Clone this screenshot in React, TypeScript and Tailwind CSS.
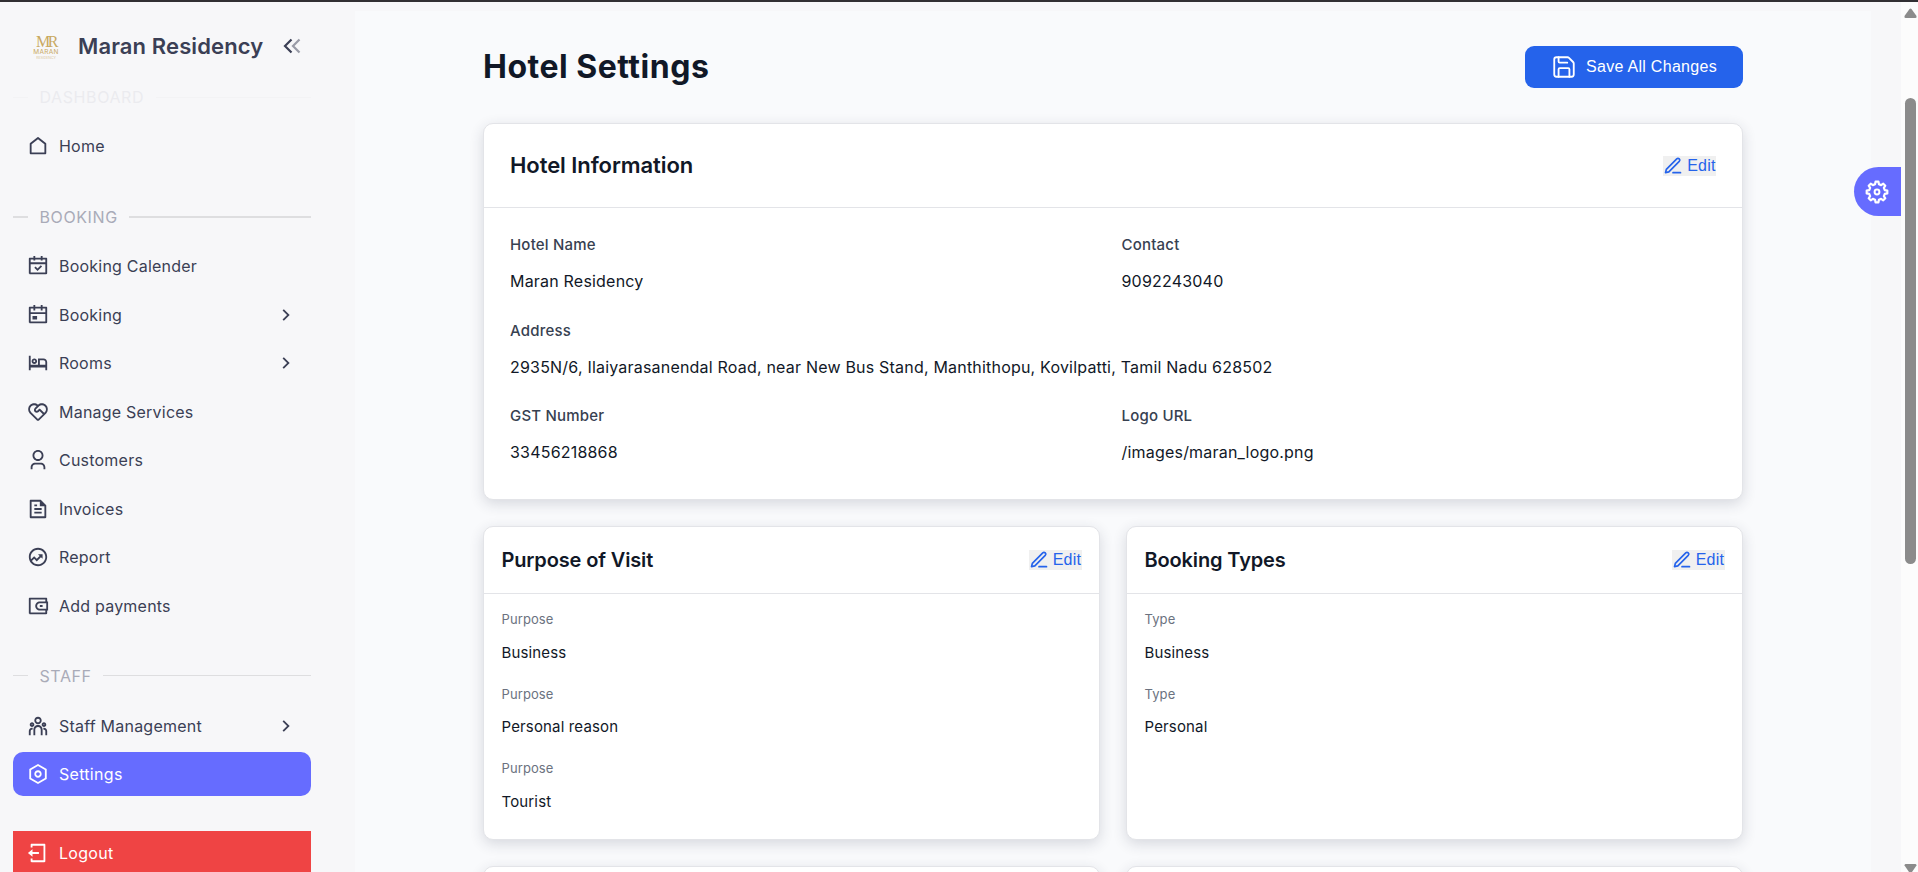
import React from "react";
import {
  RiCalendarCheckLine, RiCalendarEventLine, RiHotelBedLine, RiServiceLine,
  RiUser3Line, RiFileTextLine, RiFundsLine, RiWallet3Line, RiTeamLine, RiSettingsLine,
  RiLogoutBoxLine, RiArrowRightSLine,
} from "react-icons/ri";
import { Save } from "lucide-react";

type IconType = React.ComponentType<{ className?: string }>;

function HomeIcon({ className }: { className?: string }) {
  return (
    <svg viewBox="0 0 24 24" className={className} fill="currentColor">
      <path d="M21 20a1 1 0 0 1-1 1H4a1 1 0 0 1-1-1V9.490a1 1 0 0 1 .386-.790l8-6.222a1 1 0 0 1 1.228 0l8 6.222a1 1 0 0 1 .386.790V20ZM19 19V9.978l-7-5.444-7 5.444V19h14Z" />
    </svg>
  );
}

function Section({ label, thick }: { label: string; thick?: boolean }) {
  return (
    <div className="flex h-6 shrink-0 items-center">
      <span className={thick ? "h-[2px] w-[15px] bg-[#dedee0]" : "h-px w-[15px] bg-[#dedee0]"} />
      <span className="mx-[11.500px] text-[16px] leading-6 tracking-[0.6px] text-[#a9abb8]">{label}</span>
      <span className={thick ? "h-[2px] flex-1 bg-[#dedee0]" : "h-px flex-1 bg-[#dedee0]"} />
    </div>
  );
}

function Item({ icon: Icon, label, arrow }: { icon: IconType; label: string; arrow?: boolean }) {
  return (
    <div className="flex h-11 shrink-0 items-center pl-[14px] pr-[14px] text-[#3b3f55]">
      <Icon className="size-[22px]" />
      <span className="ml-[10px] flex-1 text-[16px] leading-6 tracking-[0.22px]">{label}</span>
      {arrow && <RiArrowRightSLine className="size-[22px]" />}
    </div>
  );
}

function Sidebar() {
  return (
    <aside className="flex w-[355px] shrink-0 flex-col pl-[13px] pr-[44px]">
      <div className="flex h-[83px] shrink-0 items-center pl-[19px] pt-[4px]">
        <div className="flex w-[28px] flex-col items-center pt-[4px] text-[#c9a961]">
          <span className="font-['Liberation_Serif',serif] text-[16px] leading-[13px] tracking-[-2.500px]">MR</span>
          <span className="mt-px text-[6.500px] leading-[7px] tracking-[0.3px]">MARAN</span>
          <span className="text-[3.500px] leading-[4px] opacity-60">RESIDENCY</span>
        </div>
        <span className="ml-[18px] flex-1 text-[22px] font-semibold leading-7 tracking-[0.12px] text-[#3b3f55]">Maran Residency</span>
        <svg viewBox="0 0 22 22" className="mr-[8px] size-[22px]" fill="none" stroke="#3b3f55" strokeWidth="2.200">
          <path d="M10.500 4.500 4 11l6.500 6.500" />
          <path d="M18.500 4.500 12 11l6.500 6.500" opacity=".5" />
        </svg>
      </div>
      <div className="shrink-0 opacity-15"><Section label="DASHBOARD" /></div>
      <div className="mt-[15px] shrink-0"><Item icon={HomeIcon} label="Home" /></div>
      <div className="mt-[37px] shrink-0"><Section label="BOOKING" thick /></div>
      <div className="mt-[15px] flex shrink-0 flex-col gap-[4.570px]">
        <Item icon={RiCalendarCheckLine} label="Booking Calender" />
        <Item icon={RiCalendarEventLine} label="Booking" arrow />
        <Item icon={RiHotelBedLine} label="Rooms" arrow />
        <Item icon={RiServiceLine} label="Manage Services" />
        <Item icon={RiUser3Line} label="Customers" />
        <Item icon={RiFileTextLine} label="Invoices" />
        <Item icon={RiFundsLine} label="Report" />
        <Item icon={RiWallet3Line} label="Add payments" />
      </div>
      <div className="mt-[36px] shrink-0"><Section label="STAFF" /></div>
      <div className="mt-[16px] shrink-0"><Item icon={RiTeamLine} label="Staff Management" arrow /></div>
      <div className="mt-[4px] flex h-11 shrink-0 items-center rounded-[10px] bg-[#666cff] pl-[14px] text-white">
        <RiSettingsLine className="size-[22px]" />
        <span className="ml-[10px] text-[16px] tracking-[0.3px]">Settings</span>
      </div>
      <div className="mt-[35px] flex h-11 shrink-0 items-center bg-[#ef4444] pl-[14px] text-white">
        <RiLogoutBoxLine className="size-[22px]" />
        <span className="ml-[10px] text-[16px] tracking-[0.3px]">Logout</span>
      </div>
    </aside>
  );
}

function EditButton() {
  return (
    <button className="flex h-5 w-[53px] items-center bg-[#f0f0f0] font-['Liberation_Sans',Arial,sans-serif] text-[16px] leading-5 text-[#2563eb]">
      <svg viewBox="0 0 24 24" className="size-5 shrink-0" fill="none" stroke="currentColor" strokeWidth="2" strokeLinecap="round" strokeLinejoin="round">
        <path d="M12 20h9" />
        <path d="M16.500 3.500a2.120 2.120 0 0 1 3 3L7 19l-4 1 1-4Z" />
      </svg>
      <span className="ml-[4.200px] tracking-[0.2px]">Edit</span>
    </button>
  );
}

const card = "rounded-[10px] border border-[#e3e4e8] bg-white shadow-[0_4px_14px_rgba(38,43,67,0.16)]";

function Field({ label, value, wide }: { label: string; value: string; wide?: boolean }) {
  return (
    <div className={wide ? "col-span-2" : ""}>
      <div className="text-[15px] font-medium leading-[22px] tracking-[0.2px] text-[#374151]">{label}</div>
      <div className="mt-[13px] text-[16px] leading-6 tracking-[0.2px] text-[#111827]">{value}</div>
    </div>
  );
}

function ListCard({ title, label, values }: { title: string; label: string; values: string[] }) {
  return (
    <section className={`${card} h-[314px]`}>
      <div className="flex h-[67px] items-center justify-between border-b border-[#e3e4e8] px-[17.500px]">
        <h3 className="text-[20px] font-semibold leading-7 tracking-[-0.14px] text-[#111827]">{title}</h3>
        <EditButton />
      </div>
      <div className="flex flex-col gap-[19.600px] px-[17.500px] pt-[15px]">
        {values.map((v) => (
          <div key={v}>
            <div className="text-[13px] leading-5 tracking-[0.1px] text-[#6b7280]">{label}</div>
            <div className="mt-[12.500px] text-[15px] leading-[22.500px] tracking-[0.15px] text-[#111827]">{v}</div>
          </div>
        ))}
      </div>
    </section>
  );
}

function Scrollbar() {
  return (
    <div className="flex w-[17px] shrink-0 flex-col items-center bg-[#fcfcfc]">
      <svg viewBox="0 0 13 10" className="mt-[6px] ml-[2px] h-[10px] w-[13px]"><path d="M5.500 1Q6.500 0 7.500 1L12.500 8Q13 10 11.500 10H1.500Q0 10 .500 8Z" fill="#8b8b8b" /></svg>
      <div className="mt-[80px] ml-[2px] h-[466px] w-[11px] rounded-full bg-[#8b8b8b]" />
      <div className="flex-1" />
      <svg viewBox="0 0 13 8" className="ml-[2px] h-[8px] w-[13px]"><path d="M.500 1.500Q.500 0 1.500 0H11.500Q12.500 0 12.500 1.500L8 8H5Z" fill="#8b8b8b" /></svg>
    </div>
  );
}

/* Eight-toothed gear outline: tooth tips at radius 10.4, valleys at radius 8. */
const gearPoints = Array.from({ length: 8 }, (_, i) =>
  [[-14, 8], [-8, 10.4], [8, 10.4], [14, 8]].map(([offset, radius]) => {
    const a = ((i * 45 + offset) * Math.PI) / 180;
    return `${(12 + radius * Math.cos(a)).toFixed(2)},${(12 + radius * Math.sin(a)).toFixed(2)}`;
  }).join(" ")
).join(" ");

export default function App() {
  return (
    <div className="relative flex h-[872px] w-[1918px] flex-col overflow-hidden bg-[#f7f7f9] font-['Inter',sans-serif]">
      <div className="h-[2px] shrink-0 bg-[#312f33]" />
      <div className="flex min-h-0 flex-1">
        <Sidebar />
        <main className="mt-[9px] flex w-[1516px] shrink-0 flex-col overflow-hidden bg-[#f9fafc] pl-[128px] pr-[128px]">
          <div className="mt-[35px] flex h-[42px] shrink-0 items-center justify-between">
            <h1 className="text-[32px] font-bold leading-10 tracking-[0.5px] text-[#111827]">Hotel Settings</h1>
            <button className="flex h-[42px] w-[218px] items-center rounded-[9px] bg-[#2563eb] pl-[25.500px] font-['Liberation_Sans',Arial,sans-serif] text-[16px] text-white">
              <Save className="size-[26px]" strokeWidth={1.7} />
              <span className="ml-[9.500px] whitespace-nowrap tracking-[0.29px]">Save All Changes</span>
            </button>
          </div>
          <section className={`${card} mt-[35px] h-[377px] shrink-0`}>
            <div className="flex h-[84px] items-center justify-between border-b border-[#e3e4e8] px-[26px]">
              <h2 className="pb-[2px] text-[22px] font-semibold leading-8 tracking-[-0.07px] text-[#111827]">Hotel Information</h2>
              <EditButton />
            </div>
            <div className="grid grid-cols-2 gap-x-[17px] gap-y-[26.500px] px-[26px] pt-[26px]">
              <Field label="Hotel Name" value="Maran Residency" />
              <Field label="Contact" value="9092243040" />
              <Field wide label="Address" value="2935N/6, Ilaiyarasanendal Road, near New Bus Stand, Manthithopu, Kovilpatti, Tamil Nadu 628502" />
              <Field label="GST Number" value="33456218868" />
              <Field label="Logo URL" value="/images/maran_logo.png" />
            </div>
          </section>
          <div className="mt-[26px] grid shrink-0 grid-cols-2 gap-[26px]">
            <ListCard title="Purpose of Visit" label="Purpose" values={["Business", "Personal reason", "Tourist"]} />
            <ListCard title="Booking Types" label="Type" values={["Business", "Personal"]} />
            <div className={`${card} h-20`} />
            <div className={`${card} h-20`} />
          </div>
        </main>
        <div className="flex-1" />
        <Scrollbar />
      </div>
      <div className="absolute right-[17px] top-[167px] flex h-[49px] w-[47px] items-center rounded-l-full bg-[#666cff] pl-[11px] text-white">
        <svg viewBox="0 0 24 24" className="size-6" fill="none" stroke="currentColor" strokeWidth="2.200" strokeLinejoin="round">
          <polygon points={gearPoints} />
          <circle cx="12" cy="12" r="2.400" strokeWidth="2" />
        </svg>
      </div>
    </div>
  );
}
